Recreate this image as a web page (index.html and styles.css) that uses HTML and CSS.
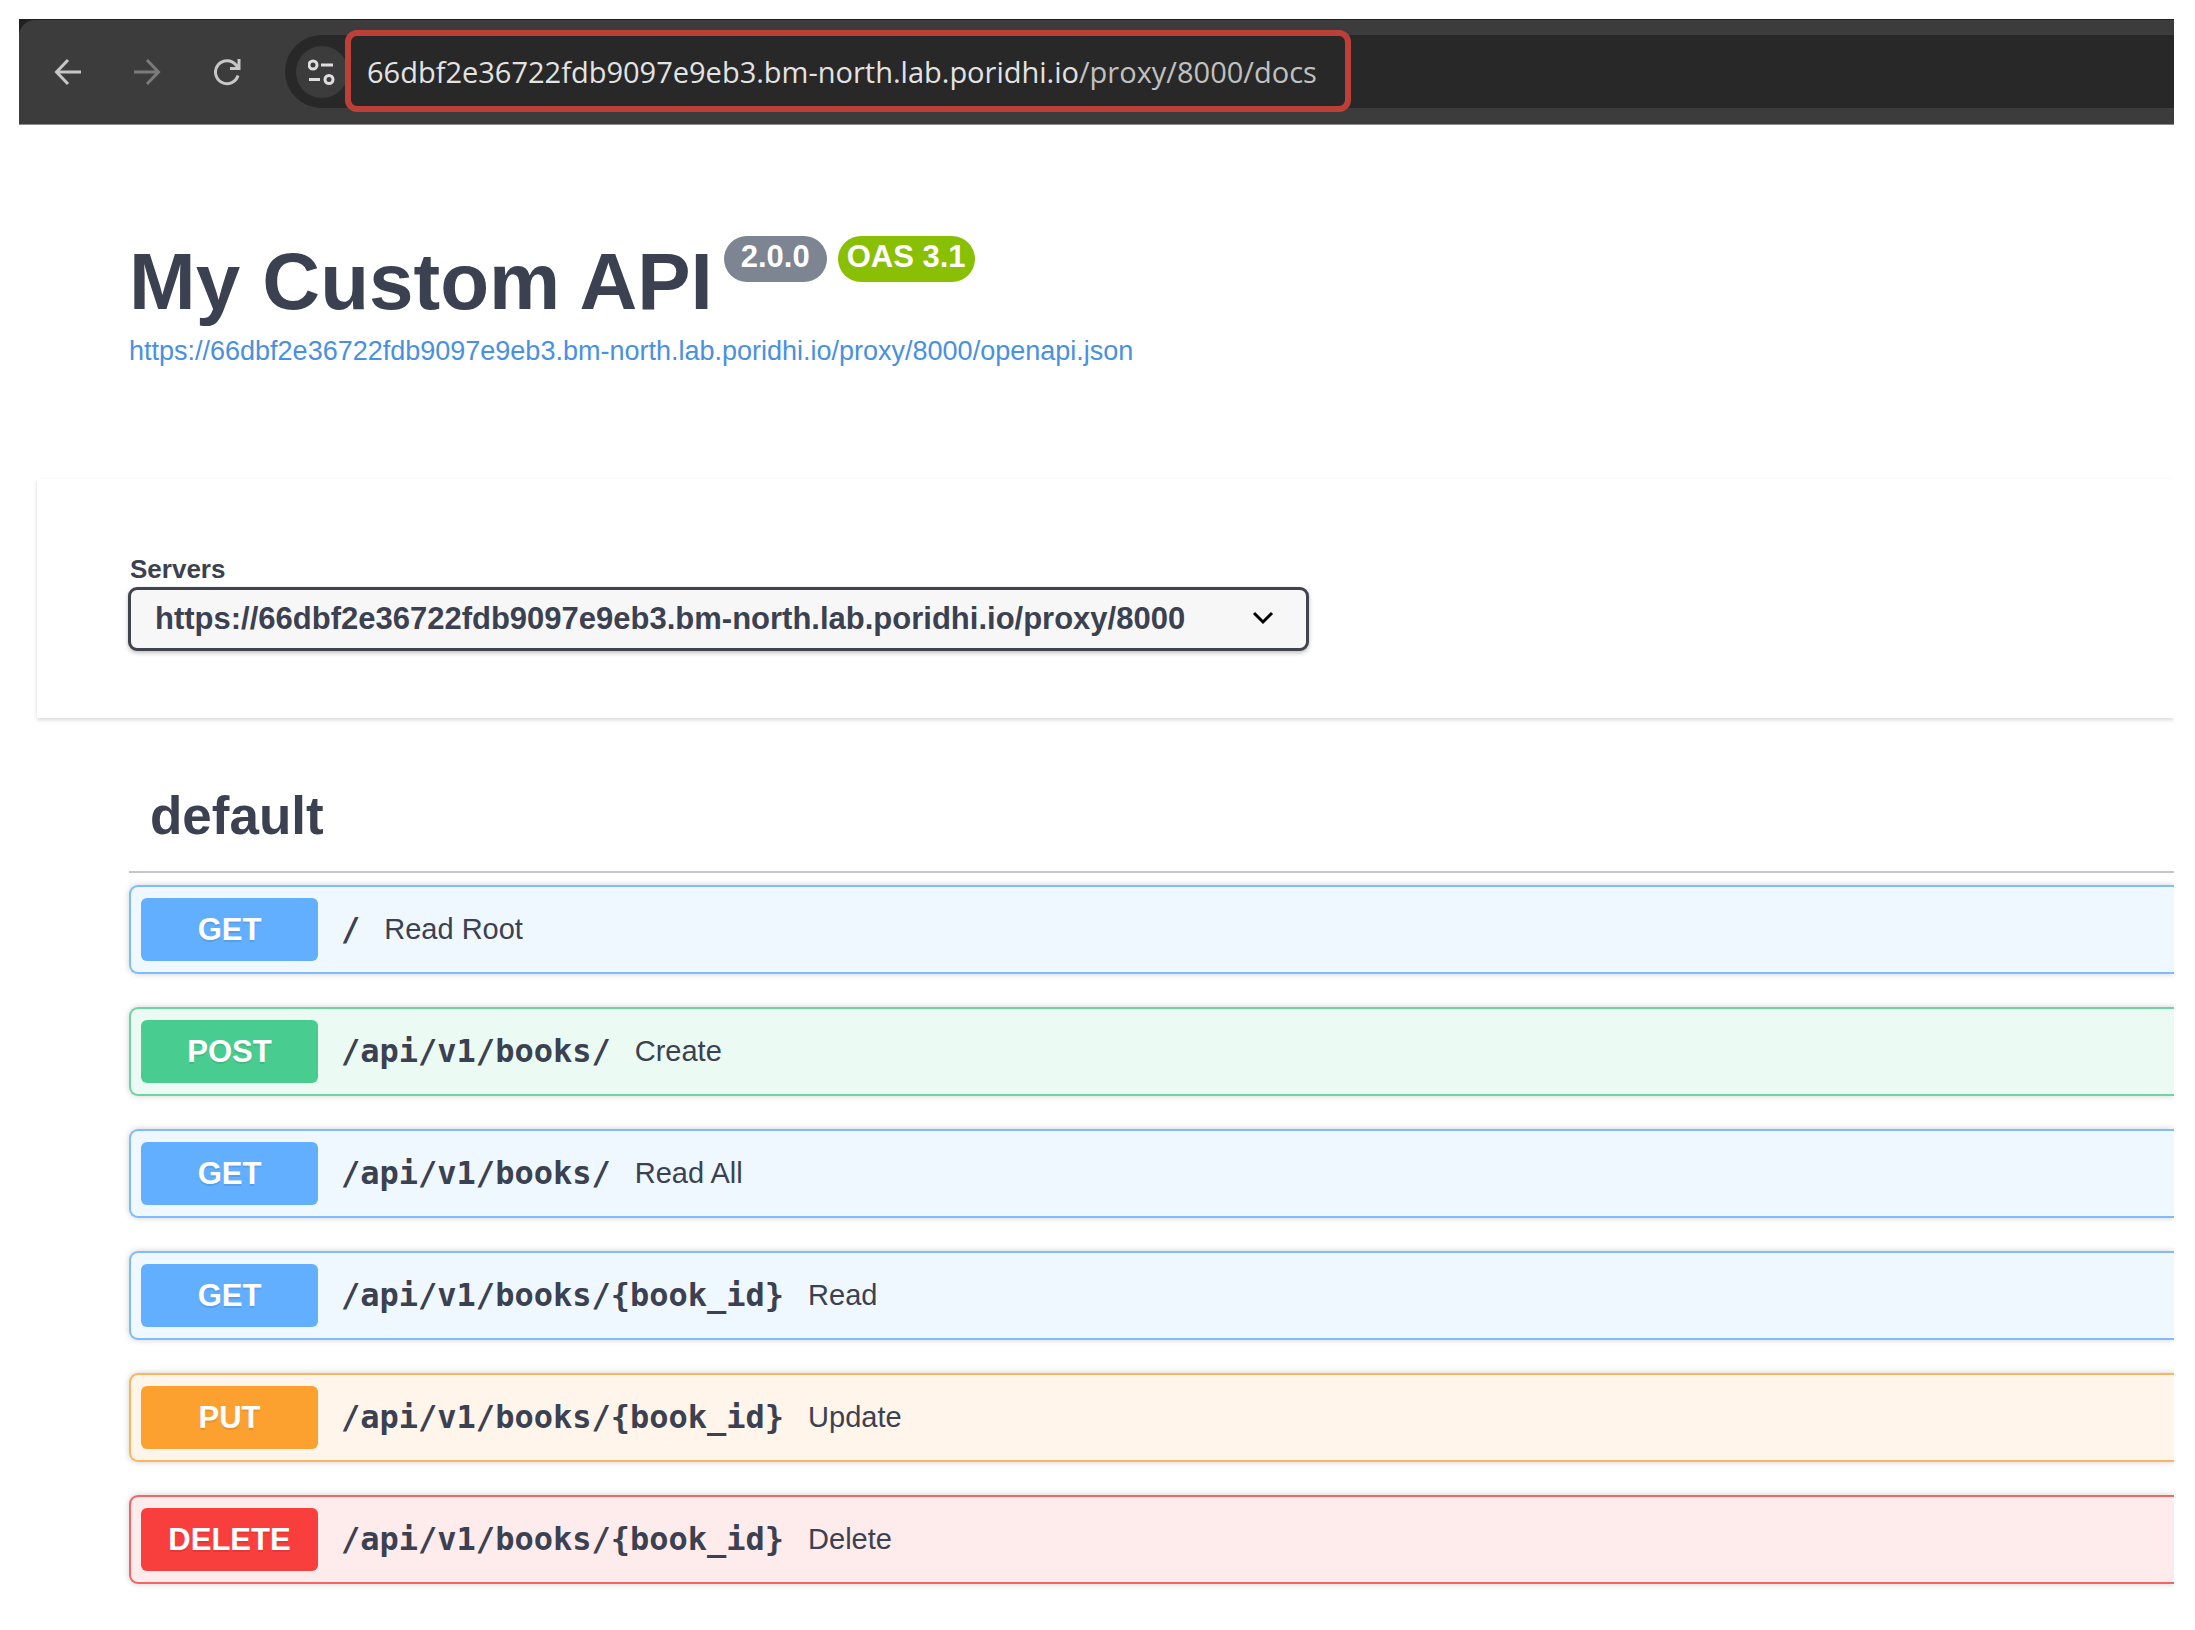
FILE: index.html
```html
<!DOCTYPE html>
<html lang="en">
<head>
<meta charset="utf-8">
<title>My Custom API - Swagger UI</title>
<link rel="stylesheet" href="styles.css">
</head>
<body>
<div class="window">
  <header class="chrome">
    <div class="toolbar">
      <nav class="nav">
        <button class="nav-button" type="button" aria-label="Back">
          <svg viewBox="0 0 28 28" width="28" height="28"><path d="M27 14H3M14 2L2.500 14L14 26"/></svg>
        </button>
        <button class="nav-button nav-button-off" type="button" aria-label="Forward" disabled>
          <svg viewBox="0 0 28 28" width="28" height="28"><path d="M0 14H24M13 2L24.500 14L13 26"/></svg>
        </button>
        <button class="nav-button" type="button" aria-label="Reload">
          <svg viewBox="0 0 28 28" width="28" height="28"><path d="M24 17.500A11.500 11.500 0 1 1 22 7L24.500 10M25 1V10.500H16"/></svg>
        </button>
      </nav>
      <div class="omnibox">
        <button class="site-info" type="button" aria-label="View site information">
          <svg viewBox="0 0 28 28" width="28" height="28"><circle cx="5" cy="7" r="4"/><path d="M13 7H25M1 21.500H12"/><circle cx="21" cy="21.500" r="4"/></svg>
        </button>
        <div class="address">66dbf2e36722fdb9097e9eb3.bm-north.lab.poridhi.io<span class="address-path">/proxy/8000/docs</span></div>
      </div>
    </div>
  </header>

  <main class="docs">
    <section class="info">
      <div class="title-row">
        <h1 class="title">My Custom API</h1>
        <span class="badge badge-version">2.0.0</span>
        <span class="badge badge-oas">OAS 3.1</span>
      </div>
      <a class="spec-link" href="#">https://66dbf2e36722fdb9097e9eb3.bm-north.lab.poridhi.io/proxy/8000/openapi.json</a>
    </section>

    <section class="servers">
      <label class="servers-label" for="servers">Servers</label>
      <div class="select-wrap">
        <select class="select" id="servers">
          <option>https://66dbf2e36722fdb9097e9eb3.bm-north.lab.poridhi.io/proxy/8000</option>
        </select>
        <svg class="chevron" viewBox="0 0 22 14" width="22" height="14"><path d="M2 2L11 11L20 2"/></svg>
      </div>
    </section>

    <section class="operations">
      <h2 class="tag">default</h2>
      <div class="list">
        <a class="op get" href="#"><span class="method">GET</span><code class="path">/</code><span class="summary">Read Root</span></a>
        <a class="op post" href="#"><span class="method">POST</span><code class="path">/api/v1/books/</code><span class="summary">Create</span></a>
        <a class="op get" href="#"><span class="method">GET</span><code class="path">/api/v1/books/</code><span class="summary">Read All</span></a>
        <a class="op get" href="#"><span class="method">GET</span><code class="path">/api/v1/books/{book_id}</code><span class="summary">Read</span></a>
        <a class="op put" href="#"><span class="method">PUT</span><code class="path">/api/v1/books/{book_id}</code><span class="summary">Update</span></a>
        <a class="op delete" href="#"><span class="method">DELETE</span><code class="path">/api/v1/books/{book_id}</code><span class="summary">Delete</span></a>
      </div>
    </section>
  </main>
</div>
</body>
</html>
```
FILE: styles.css
```css
* {
  box-sizing: border-box;
}

body {
  margin: 0;
  padding: 19px 21px 19px 19px;
  background: #fff;
  color: #3b4151;
  font-family: "Liberation Sans", Arial, sans-serif;
}

.window {
  overflow: hidden;
}

/* Browser toolbar */
.chrome {
  padding-top: 1px;
  background: #1f2020;
  border-bottom: 1px solid #8a8a8a;
}

.toolbar {
  display: flex;
  align-items: center;
  gap: 43px;
  padding: 15px 0 16px 35px;
  background: #3c3c3c;
  border-top-left-radius: 16px;
}

.nav {
  display: flex;
  gap: 52px;
}

.nav-button,
.site-info {
  display: flex;
  align-items: center;
  justify-content: center;
  padding: 0;
  border: 0;
  background: none;
  color: #c7c7c7;
}

.nav-button svg,
.site-info svg {
  fill: none;
  stroke: currentColor;
  stroke-width: 3;
}

.nav-button-off {
  color: #7b7b7b;
}

.omnibox {
  display: flex;
  flex: 1;
  align-items: center;
  height: 73px;
  padding-left: 11px;
  background: #282828;
  border-radius: 37px 0 0 37px;
}

.site-info {
  width: 52px;
  height: 52px;
  border-radius: 50%;
  background: #3c3c3c;
  color: #dedede;
}

.address {
  position: relative;
  margin-left: -3px;
  padding: 0 34px 0 22px;
  color: #e3e3e3;
  font-family: "Open Sans", "Segoe UI", sans-serif;
  font-size: 29px;
  line-height: 73px;
  white-space: nowrap;
}

.address::after {
  content: "";
  position: absolute;
  inset: -5px 0 -4px;
  border: 6px solid #bc3f38;
  border-radius: 12px;
}

.address-path {
  color: #c0c0c0;
}

/* API info */
.info {
  padding: 107px 0 111px 110px;
}

.title-row {
  display: flex;
  align-items: flex-start;
  gap: 11px;
}

.title {
  margin: 0;
  font-size: 80px;
  line-height: 100px;
}

.badge {
  margin-top: 4px;
  padding-bottom: 4px;
  border-radius: 23px;
  color: #fff;
  font-size: 31px;
  font-weight: bold;
  line-height: 42px;
}

.badge-version {
  padding-left: 17px;
  padding-right: 17px;
  background: #7d8492;
}

.badge-oas {
  padding-left: 9px;
  padding-right: 9px;
  background: #89bf04;
}

.spec-link {
  display: block;
  margin-top: 2px;
  color: #4990e2;
  font-size: 27px;
  line-height: 34px;
  text-decoration: none;
}

/* Server picker */
.servers {
  margin-left: 18px;
  padding: 74px 0 67px 92px;
  background: #fff;
  box-shadow: 0 2px 4px rgba(0, 0, 0, 0.15);
}

.servers-label {
  display: block;
  margin-bottom: 2px;
  padding-left: 1px;
  font-size: 26px;
  font-weight: bold;
  line-height: 32px;
}

.select-wrap {
  position: relative;
  width: max-content;
  margin-left: -1px;
}

.select {
  display: block;
  height: 64px;
  padding: 0 120px 2px 24px;
  appearance: none;
  border: 3px solid #41444e;
  border-radius: 9px;
  background: #f7f7f7;
  box-shadow: 0 2px 4px rgba(0, 0, 0, 0.25);
  color: #3b4151;
  font-family: inherit;
  font-size: 31px;
  font-weight: bold;
}

.chevron {
  position: absolute;
  top: 24px;
  right: 35px;
  fill: none;
  stroke: #000;
  stroke-width: 3;
  pointer-events: none;
}

/* Operations */
.operations {
  padding: 53px 0 9px 110px;
}

.tag {
  margin: 0;
  padding: 11px 0 21px 21px;
  border-bottom: 2px solid #c4c6cb;
  font-size: 53px;
  line-height: 68px;
}

.list {
  display: flex;
  flex-direction: column;
  gap: 33px;
  padding-top: 12px;
}

.op {
  display: flex;
  align-items: center;
  padding: 11px 10px;
  border: 2px solid;
  border-right: 0;
  border-radius: 9px 0 0 9px;
  box-shadow: 0 0 6px rgba(0, 0, 0, 0.19);
  color: #3b4151;
  line-height: 63px;
  text-decoration: none;
}

.method {
  width: 177px;
  margin-right: 23px;
  border-radius: 6px;
  color: #fff;
  font-size: 31px;
  font-weight: bold;
  text-align: center;
  text-shadow: 0 2px 0 rgba(0, 0, 0, 0.1);
}

.path {
  margin-right: 24px;
  font-family: "DejaVu Sans Mono", monospace;
  font-size: 32px;
  font-weight: bold;
}

.summary {
  font-size: 29px;
}

.get {
  border-color: #7dbcfd;
  background: #eff7ff;
}

.get .method {
  background: #61affe;
}

.post {
  border-color: #6dd5a3;
  background: #ebfaf3;
}

.post .method {
  background: #49cc90;
}

.put {
  border-color: #fcb55c;
  background: #fff5ea;
}

.put .method {
  background: #fca130;
}

.delete {
  border-color: #f66464;
  background: #feebeb;
}

.delete .method {
  background: #f93e3e;
}
```
